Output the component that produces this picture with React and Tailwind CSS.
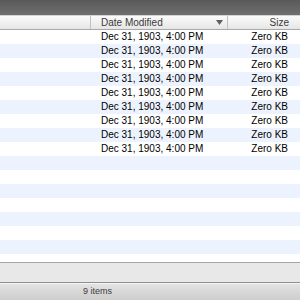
const files = Array.from({ length: 9 }, () => ({ date: 'Dec 31, 1903, 4:00 PM', size: 'Zero KB' }));

export default function App() {
  const rows = Array.from({ length: 17 }, (_, i) => files[i] || null);
  return (
    <div
      className="w-[300px] h-[300px] flex flex-col overflow-hidden bg-white text-black"
      style={{ fontFamily: "'Liberation Sans', Arial, sans-serif" }}
    >
      {/* dark title strip */}
      <div className="h-[15px] shrink-0 bg-gradient-to-b from-[#595959] to-[#6f6f6f]" />

      {/* column header */}
      <div className="h-[15px] shrink-0 flex border-t border-t-[#d4d4d4] border-b border-b-[#a9a9a9] bg-gradient-to-b from-[#fbfbfb] to-[#e6e6e6] text-[10px] text-[#3a3a3a] leading-[13px]">
        <div className="w-[91px] shrink-0 border-r border-r-[#c2c2c2]" />
        <div className="w-[137px] shrink-0 flex items-center justify-between pl-[10px] pr-[4px] border-r border-r-[#c2c2c2]">
          <span>Date Modified</span>
          <svg width="7" height="5" viewBox="0 0 7 5">
            <path d="M0 0h7L3.5 5z" fill="#5f5f5f" />
          </svg>
        </div>
        <div className="flex-1 text-right pr-[11px]">Size</div>
      </div>

      {/* rows */}
      <div className="flex-1 overflow-hidden">
        {rows.map((r, i) => (
          <div
            key={i}
            className={`h-[14px] flex text-[10px] leading-[14px] ${i % 2 === 1 ? 'bg-[#edf3fe]' : 'bg-white'}`}
          >
            <div className="w-[91px] shrink-0" />
            <div className="w-[137px] shrink-0 pl-[10px]">{r ? r.date : ''}</div>
            <div className="flex-1 text-right pr-[12px]">{r ? r.size : ''}</div>
          </div>
        ))}
      </div>

      {/* lower gray strip */}
      <div className="h-[20px] shrink-0 border-t border-t-[#a6a6a6] bg-[#e8e8e8]" />

      {/* status bar */}
      <div className="h-[18px] shrink-0 border-t border-t-[#8f8f8f] bg-gradient-to-b from-[#e4e4e4] to-[#cdcdcd] shadow-[inset_0_1px_0_#f4f4f4] text-[9px] text-[#3c3c3c] leading-[17px] pl-[83px]">
        9 items
      </div>
    </div>
  );
}
